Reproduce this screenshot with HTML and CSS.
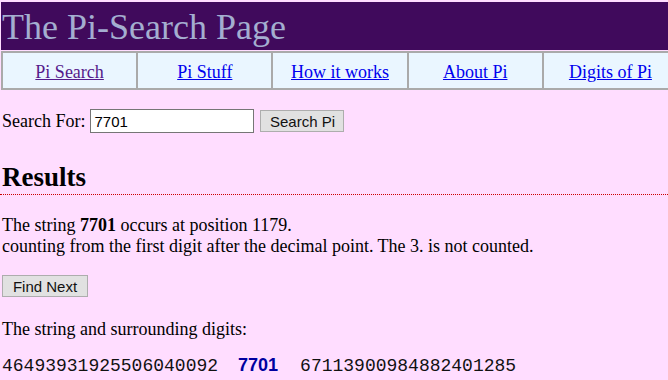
FILE: index.html
```html
<!DOCTYPE html>
<html>
  <head>
    <meta charset="utf-8" />
    <title>The Pi-Search Page</title>
    <link rel="stylesheet" href="styles.css">
  </head>
  <body>
    <div class="banner">The Pi-Search Page</div>
    <div class="nav">
      <div class="nav-cell"><a class="visited" href="#">Pi Search</a></div>
      <div class="nav-cell"><a href="#">Pi Stuff</a></div>
      <div class="nav-cell"><a href="#">How it works</a></div>
      <div class="nav-cell"><a href="#">About Pi</a></div>
      <div class="nav-cell"><a href="#">Digits of Pi</a></div>
    </div>
    <div class="content">
      <form class="search">
        <label for="q">Search For:</label>
        <input id="q" type="text" value="7701">
        <button type="button">Search Pi</button>
      </form>

      <h2>Results</h2>

      <p class="result">
        The string <b>7701</b> occurs at position 1179.<br>
        counting from the first digit after the decimal point. The 3. is not counted.
      </p>

      <p class="next"><button type="button">Find Next</button></p>

      <p class="around">The string and surrounding digits:</p>

      <p class="digits">46493931925506040092<span class="hit">7701</span>67113900984882401285</p>
    </div>
  </body>
</html>
```

FILE: styles.css
```css
html, body {
  margin:0;
  padding:0;
  background-color:#ffddff;
  font-family:"Liberation Serif", serif;
  font-size:18px;
  overflow:hidden;
}

.banner {
  margin-top:2px;
  margin-left:1px;
  width:680px;
  height:48px;
  background-color:#400a5c;
  color:#a4aed0;
  font-size:36px;
  line-height:50px;
  padding-left:1px;
}

.nav {
  display:flex;
  width:676px;
  margin-left:1px;
  margin-top:1px;
  border-top:2px solid #aaa;
  border-bottom:2px solid #aaa;
  background-color:#eaf6ff;
}

.nav-cell {
  flex:1;
  height:35px;
  line-height:38px;
  text-align:center;
  font-size:18px;
  border-left:2px solid #aaa;
}

.nav a {
  color:#0000ee;
}

.nav a.visited {
  color:#551a8b;
}

.content {
  padding:0 0 0 2px;
}

.search {
  margin:19px 0 0 0;
  display:flex;
  align-items:center;
}

.search input {
  margin:0 0 0 5px;
  width:156px;
  height:20px;
  padding:1px 3px;
  border:1px solid #767676;
  font-family:"Liberation Sans", sans-serif;
  font-size:15px;
  background:#fff;
}

.search button,
.next button {
  font-family:"Liberation Sans", sans-serif;
  font-size:15px;
  color:#111;
  background-color:#e1e1e1;
  border:1px solid #adadad;
  padding:0;
  height:22px;
}

.search button {
  margin-left:6px;
  width:84px;
}

h2 {
  margin:29px 0 0 -2px;
  padding:0 0 2px 2px;
  font-size:27px;
  line-height:30px;
  border-bottom:1px dotted #cc0000;
}

.result {
  margin:20px 0 0 0;
  line-height:21px;
}

.next {
  margin:18px 0 0 0;
  line-height:0;
}

.next button {
  width:86px;
}

.around {
  margin:22px 0 0 0;
  line-height:21px;
}

.digits {
  margin:15px 0 0 0;
  font-family:"Courier New", "Liberation Mono", monospace;
  font-size:18px;
  line-height:21px;
  color:#111;
}

.hit {
  font-family:"Liberation Sans", sans-serif;
  font-weight:bold;
  font-size:18px;
  color:#0000a0;
  margin:0 22px 0 20px;
}
```
